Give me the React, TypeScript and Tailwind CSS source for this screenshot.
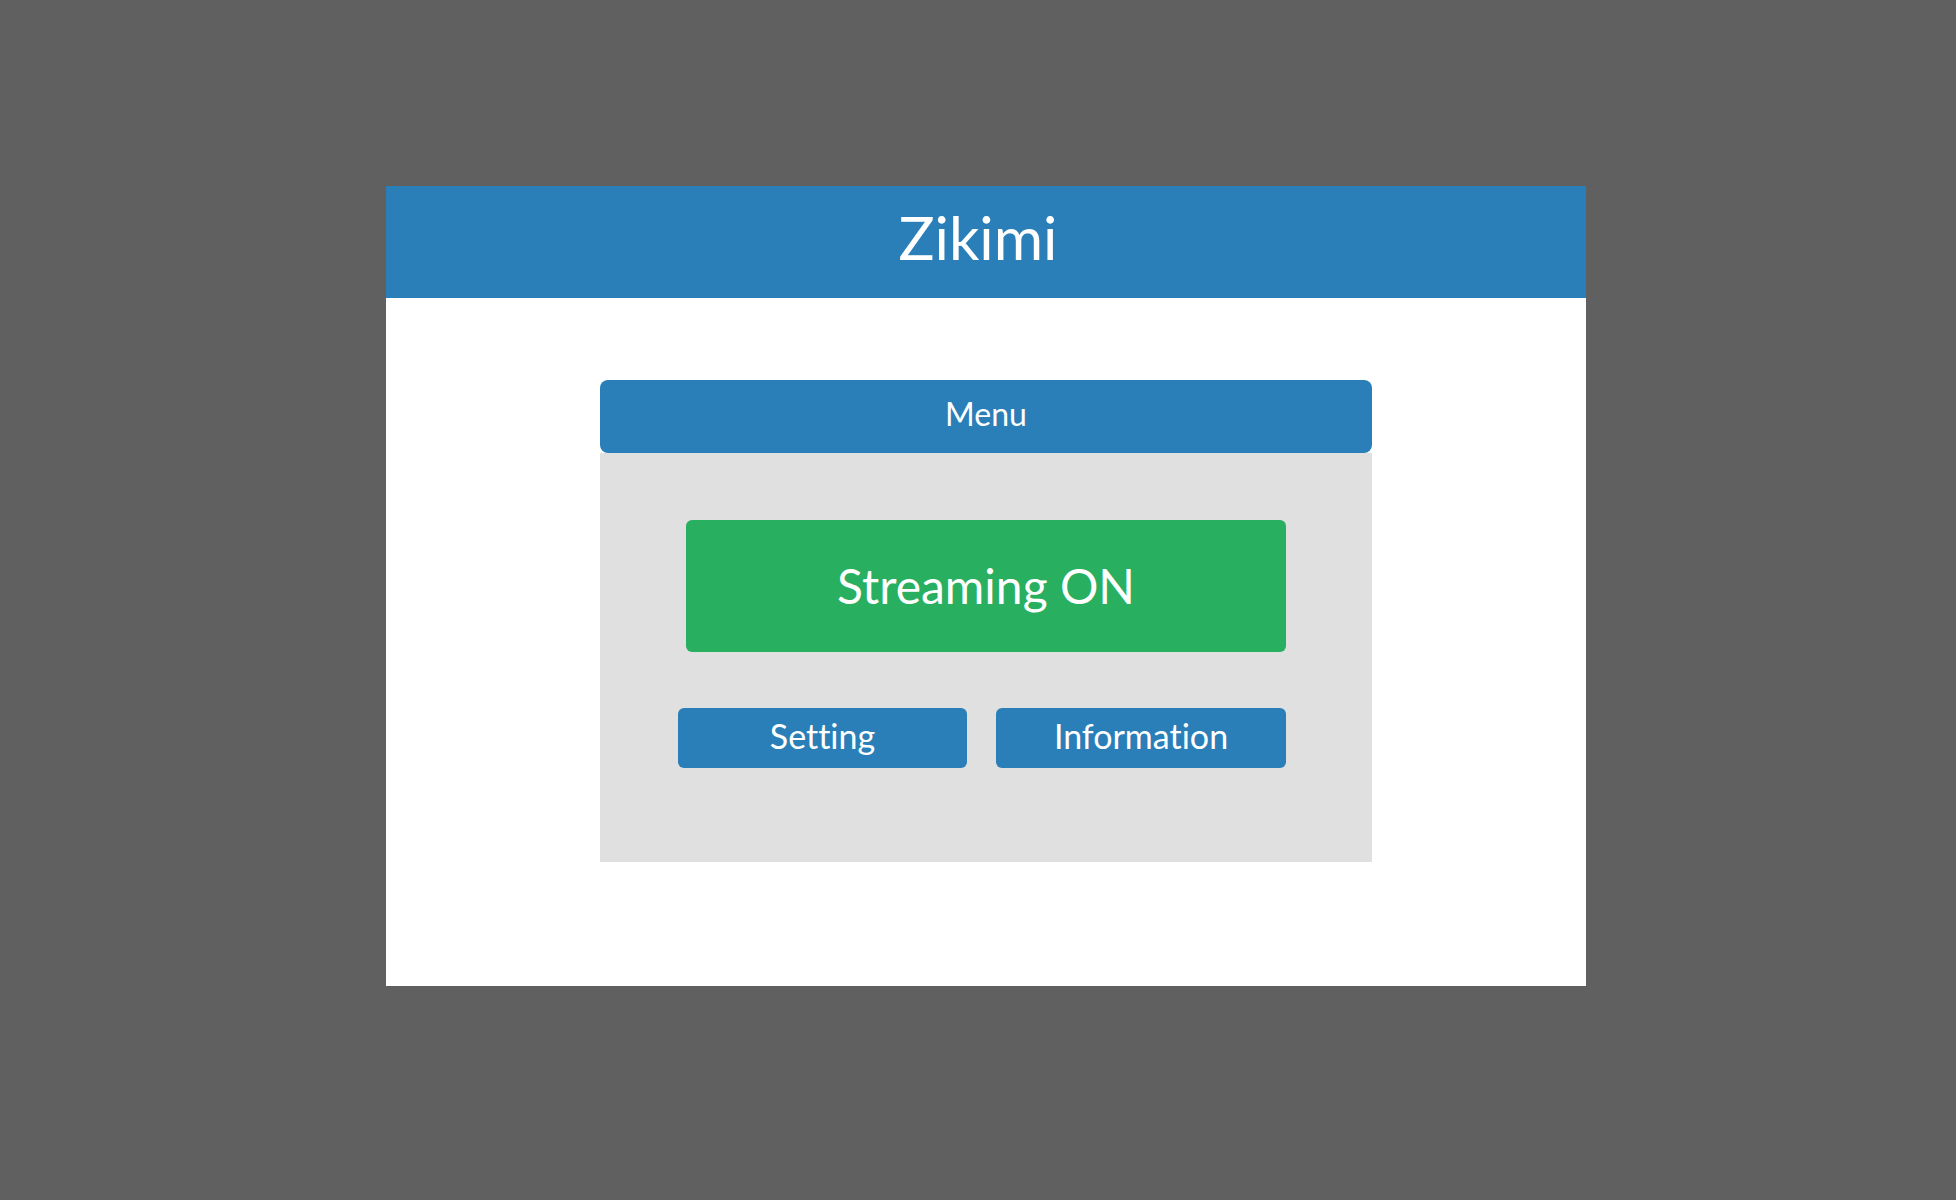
import React from 'react';

const font = { fontFamily: 'Lato, "Noto Sans", sans-serif', fontVariantLigatures: 'none' as const };

const App: React.FC = () => {
  return (
    <div className="min-h-screen w-full bg-[#606060] pt-[186px] pl-[386px]" style={font}>
      {/* Main panel */}
      <div className="w-[1200px] h-[800px] bg-white">
        <div className="h-[112px] bg-[#2a7fb8] flex items-center justify-center pb-[10px] pr-[16px]">
          <span className="text-white text-[60px] leading-none">Zikimi</span>
        </div>

        <div className="pt-[82px] pl-[214px]">
          {/* Menu card */}
          <div className="w-[772px]">
            <div className="h-[73px] bg-[#2a7fb8] rounded-lg flex items-center justify-center pb-[5px]">
              <span className="text-white text-[32px] leading-none">Menu</span>
            </div>
            <div className="h-[409px] bg-[#e0e0e0] pt-[67px]">
              <div className="ml-[86px] w-[600px] h-[132px] bg-[#28af60] rounded-md flex items-center justify-center">
                <span className="text-white text-[48px] leading-none">Streaming ON</span>
              </div>
              <div className="ml-[78px] mt-[56px] flex gap-[29px]">
                <button className="w-[289px] h-[60px] bg-[#2a7fb8] rounded-md text-white text-[34px] leading-none flex items-center justify-center pb-[5px]">
                  Setting
                </button>
                <button className="w-[290px] h-[60px] bg-[#2a7fb8] rounded-md text-white text-[34px] leading-none flex items-center justify-center pb-[5px]">
                  Information
                </button>
              </div>
            </div>
          </div>
        </div>
      </div>
    </div>
  );
};

export default App;
